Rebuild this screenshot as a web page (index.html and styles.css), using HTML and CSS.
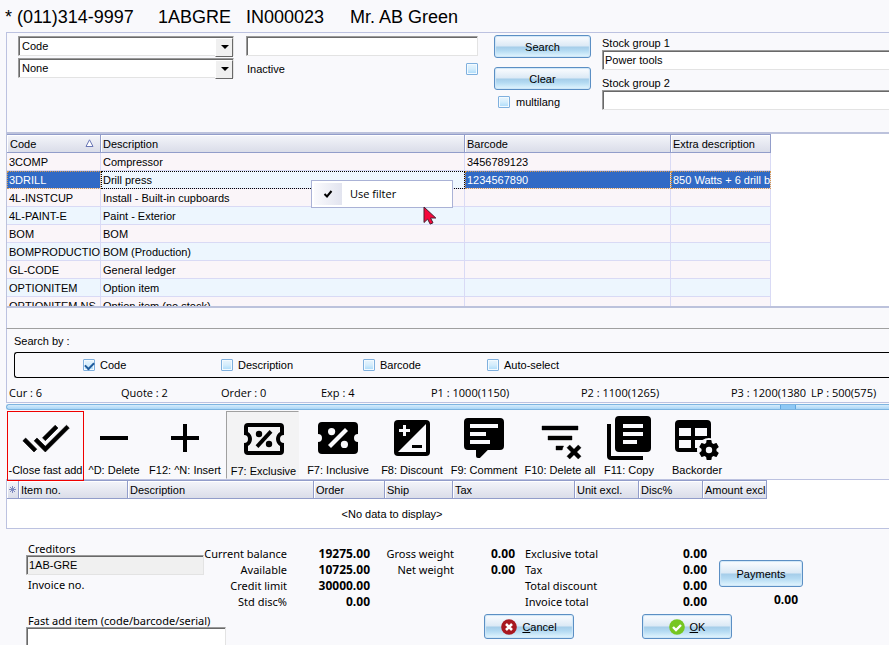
FILE: index.html
```html
<!DOCTYPE html>
<html lang="en">
<head>
<meta charset="utf-8">
<title>Invoice</title>
<link rel="stylesheet" href="styles.css">
</head>
<body>
<header class="title"><span class="t-phone">* (011)314-9997</span><span class="t-account">1ABGRE</span><span class="t-invoice">IN000023</span><span>Mr. AB Green</span></header>

<main>
<section class="filters">
  <div class="filter-selects">
    <div class="combo"><select aria-label="Search field"><option>Code</option></select></div>
    <div class="combo"><select aria-label="Second search field"><option>None</option></select></div>
  </div>
  <div class="filter-value">
    <input class="box" type="text" aria-label="Search text">
    <div class="inactive"><label for="inactive">Inactive</label><input type="checkbox" id="inactive"></div>
  </div>
  <div class="filter-actions">
    <button class="btn" type="button">Search</button>
    <button class="btn" type="button">Clear</button>
    <label class="multilang"><input type="checkbox">multilang</label>
  </div>
  <div class="filter-groups">
    <label for="g1">Stock group 1</label>
    <input class="box" id="g1" type="text" value="Power tools">
    <label for="g2">Stock group 2</label>
    <input class="box" id="g2" type="text">
  </div>
</section>

<section class="stock">
  <div class="stock-scroll">
    <table class="stock-table">
      <colgroup><col class="c-code"><col class="c-desc"><col class="c-bar"><col class="c-extra"></colgroup>
      <thead><tr><th><div class="sorted">Code<svg width="9" height="9" viewBox="0 0 9 9"><path d="M4.500.8L8 7.500H1z" fill="#fff" stroke="#6a76b5"/></svg></div></th><th>Description</th><th>Barcode</th><th>Extra description</th></tr></thead>
      <tbody>
        <tr><td>3COMP</td><td>Compressor</td><td>3456789123</td><td></td></tr>
        <tr class="selected"><td>3DRILL</td><td class="focus">Drill press</td><td>1234567890</td><td>850 Watts + 6 drill b</td></tr>
        <tr><td>4L-INSTCUP</td><td>Install - Built-in cupboards</td><td></td><td></td></tr>
        <tr><td>4L-PAINT-E</td><td>Paint - Exterior</td><td></td><td></td></tr>
        <tr><td>BOM</td><td>BOM</td><td></td><td></td></tr>
        <tr><td>BOMPRODUCTIO</td><td>BOM (Production)</td><td></td><td></td></tr>
        <tr><td>GL-CODE</td><td>General ledger</td><td></td><td></td></tr>
        <tr><td>OPTIONITEM</td><td>Option item</td><td></td><td></td></tr>
        <tr><td>OPTIONITEM NS</td><td>Option item (no stock)</td><td></td><td></td></tr>
      </tbody>
    </table>
  </div>
  <div class="menu"><span class="menu-check"><svg width="10" height="10" viewBox="0 0 10 10"><path d="M1.500 5L4 7.500 8.500 2" fill="none" stroke="#000" stroke-width="2"/></svg></span><span>Use filter</span></div>
  <svg class="pointer" width="14" height="20" viewBox="0 0 14 20"><path d="M1 1v15.500l3.600-3.400 2.600 5 2.800-1.300-2.500-4.800h5.300z" fill="#f5083c" stroke="#4a2030"/></svg>
</section>

<div class="strip"></div>

<section class="searchby">
  <div class="searchby-title">Search by :</div>
  <div class="options">
    <label><input type="checkbox" checked>Code</label>
    <label><input type="checkbox">Description</label>
    <label><input type="checkbox">Barcode</label>
    <label><input type="checkbox">Auto-select</label>
  </div>
  <div class="stats"><span>Cur : 6</span><span>Quote : 2</span><span>Order : 0</span><span>Exp : 4</span><span>P1 : 1000(1150)</span><span>P2 : 1100(1265)</span><span class="cut">P3 : 1200(1380)</span><span>LP : 500(575)</span></div>
</section>

<div class="splitter"><div class="grip"></div></div>

<nav class="toolbar">
  <button type="button" class="tool w-close"><svg viewBox="0 0 24 24"><path d="M18 7l-1.410-1.410-6.340 6.340 1.410 1.410L18 7zm4.240-1.410L11.660 16.170 7.480 12l-1.410 1.410L11.660 19l12-12-1.420-1.410zM.41 13.410L6 19l1.410-1.410L1.830 12 .41 13.410z" stroke="#000" stroke-width=".3"/></svg>-Close fast add</button>
  <button type="button" class="tool w-delete"><svg viewBox="0 0 24 24"><path d="M5 11h14v2H5z"/></svg>^D: Delete</button>
  <button type="button" class="tool w-insert"><svg viewBox="0 0 24 24"><path d="M19 13h-6v6h-2v-6H5v-2h6V5h2v6h6z"/></svg>F12: ^N: Insert</button>
  <button type="button" class="tool w-excl"><svg viewBox="0 0 24 24"><path fill-rule="evenodd" d="M4 4h16a2 2 0 0 1 2 2v4a2 2 0 0 0 0 4v4a2 2 0 0 1-2 2H4a2 2 0 0 1-2-2v-4a2 2 0 0 0 0-4V6a2 2 0 0 1 2-2zM4 6v2.540a4 4 0 0 1 0 6.920V18h16v-2.540a4 4 0 0 1 0-6.920V6z"/><path d="M14.800 7.500L16.200 8.900 9.200 16.500 7.800 15.100z"/><circle cx="9.500" cy="9.500" r="1.600"/><circle cx="14.500" cy="14.500" r="1.600"/></svg>F7: Exclusive</button>
  <button type="button" class="tool w-incl"><svg viewBox="0 0 24 24"><path d="M4 4h16a2 2 0 0 1 2 2v4a2 2 0 0 0 0 4v4a2 2 0 0 1-2 2H4a2 2 0 0 1-2-2v-4a2 2 0 0 0 0-4V6a2 2 0 0 1 2-2z"/><path d="M15.500 7L17 8.500 8.500 17 7 15.500z" fill="#f9f9fc"/><circle cx="8.800" cy="8.800" r="1.800" fill="#f9f9fc"/><circle cx="15.200" cy="15.200" r="1.800" fill="#f9f9fc"/></svg>F7: Inclusive</button>
  <button type="button" class="tool w-disc"><svg viewBox="0 0 24 24"><rect x="3" y="3" width="18" height="18" rx="2"/><path d="M19 5v14H5z" fill="#f9f9fc"/><path d="M5.500 7.500h2v-2H9v2h2V9H9v2H7.500V9h-2z" fill="#f9f9fc"/><path d="M12 15.500h5V17h-5z"/></svg>F8: Discount</button>
  <button type="button" class="tool w-comment"><svg viewBox="0 0 24 24"><path fill-rule="evenodd" d="M9 22a1 1 0 0 1-1-1v-3H4a2 2 0 0 1-2-2V4a2 2 0 0 1 2-2h16a2 2 0 0 1 2 2v12a2 2 0 0 1-2 2h-6.100l-3.700 3.710c-.2.19-.45.29-.7.29zM5 5v2h14V5zm0 4v2h8V9zm0 4v2h10v-2z"/></svg>F9: Comment</button>
  <button type="button" class="tool w-delall"><svg viewBox="0 0 24 24"><path d="M21 8H3V6h18zM13.810 16H10v2h3.090c.12-.72.37-1.390.72-2M18 11H6v2h12zM21.120 15.460L19 17.590l-2.120-2.130-1.410 1.420L17.590 19l-2.120 2.120 1.410 1.420L19 20.410l2.120 2.130 1.420-1.420L20.410 19l2.130-2.120z" stroke="#000" stroke-width=".2"/></svg>F10: Delete all</button>
  <button type="button" class="tool w-copy"><svg viewBox="0 0 24 24"><path d="M3 5H1v16a2 2 0 0 0 2 2h16v-2H3z"/><path fill-rule="evenodd" d="M21 1H7a2 2 0 0 0-2 2v14a2 2 0 0 0 2 2h14a2 2 0 0 0 2-2V3a2 2 0 0 0-2-2zM9 5h10v2H9zm0 4h10v2H9zm0 4h7v2H9z"/></svg>F11: Copy</button>
  <button type="button" class="tool w-back"><svg viewBox="1 0 24 24"><path fill-rule="evenodd" d="M4 3h14a2 2 0 0 1 2 2v7.080a6 6 0 0 0-4.320.920H12v4h1.080a6 6 0 0 0 0 2H4a2 2 0 0 1-2-2V5a2 2 0 0 1 2-2zM4 7v4h6V7zm8 0v4h6V7zm-8 6v4h6v-4z"/><path transform="translate(13 12) scale(.5)" fill-rule="evenodd" d="M19.430 12.980c.04-.32.07-.64.07-.98s-.03-.66-.07-.98l2.110-1.650c.19-.15.24-.42.12-.64l-2-3.460c-.12-.22-.39-.3-.61-.22l-2.490 1c-.52-.4-1.080-.73-1.690-.98l-.38-2.650A.49.49 0 0 0 14 2h-4c-.25 0-.46.18-.49.42l-.38 2.650c-.61.25-1.170.59-1.690.98l-2.490-1c-.23-.09-.49 0-.61.22l-2 3.460c-.13.22-.07.49.12.64l2.110 1.650c-.04.32-.07.65-.07.98s.03.66.07.98l-2.110 1.650c-.19.15-.24.42-.12.64l2 3.460c.12.22.39.3.61.22l2.490-1c.52.4 1.080.73 1.690.98l.38 2.650c.03.24.24.42.49.42h4c.25 0 .46-.18.49-.42l.38-2.650c.61-.25 1.170-.59 1.690-.98l2.490 1c.23.09.49 0 .61-.22l2-3.460c.12-.22.07-.49-.12-.64zM12 15.200a3.200 3.200 0 1 1 0-6.400 3.200 3.200 0 0 1 0 6.400z"/></svg>Backorder</button>
</nav>

<section class="lines">
  <table class="line-table">
    <colgroup><col class="l-mark"><col class="l-item"><col class="l-desc"><col class="l-order"><col class="l-ship"><col class="l-tax"><col class="l-unit"><col class="l-disc"><col class="l-amount"></colgroup>
    <thead><tr><th class="mark"><svg width="7" height="7" viewBox="0 0 7 7"><path d="M3.500 0v7M0 3.500h7M1 1l5 5M6 1L1 6" stroke="#7f8bc0" fill="none"/></svg></th><th>Item no.</th><th>Description</th><th>Order</th><th>Ship</th><th>Tax</th><th>Unit excl.</th><th>Disc%</th><th>Amount excl</th></tr></thead>
    <tbody><tr><td colspan="9">&lt;No data to display&gt;</td></tr></tbody>
  </table>
</section>

<section class="footer">
  <div class="account">
    <label for="cred">Creditors</label>
    <input class="box readonly" id="cred" type="text" value="1AB-GRE" readonly>
    <div class="invoice-no">Invoice no.</div>
    <label for="fast">Fast add item (code/barcode/serial)</label>
    <input class="box fast" id="fast" type="text">
  </div>
  <div class="sums">
    <div class="totals">
      <span class="r">Current balance</span><b>19275.00</b><span class="r">Gross weight</span><b>0.00</b><span class="l">Exclusive total</span><b>0.00</b>
      <span class="r">Available</span><b>10725.00</b><span class="r">Net weight</span><b>0.00</b><span class="l">Tax</span><b>0.00</b>
      <span class="r">Credit limit</span><b>30000.00</b><span></span><span></span><span class="l">Total discount</span><b>0.00</b>
      <span class="r">Std disc%</span><b>0.00</b><span></span><span></span><span class="l">Invoice total</span><b>0.00</b>
    </div>
    <div class="confirm">
      <button class="btn" type="button"><svg width="16" height="16" viewBox="0 0 16 16"><circle cx="8" cy="8" r="7.800" fill="#a81820"/><path d="M5 5l6 6M11 5l-6 6" stroke="#fff" stroke-width="2.600"/></svg><span><u>C</u>ancel</span></button>
      <button class="btn" type="button"><svg width="16" height="16" viewBox="0 0 16 16"><circle cx="8" cy="8" r="7.800" fill="#76c622"/><path d="M4 8l3 3 5-5" fill="none" stroke="#fff" stroke-width="2.400"/></svg><span><u>O</u>K</span></button>
    </div>
  </div>
  <div class="pay"><button class="btn" type="button">Payments</button><b>0.00</b></div>
</section>
</main>
</body>
</html>
```
FILE: styles.css
```css
* { box-sizing: border-box; }
body {
  margin: 0;
  background: #f9f9fc;
  color: #000;
  font: 11px/14px "Liberation Sans", Arial, sans-serif;
  overflow: hidden;
  white-space: nowrap;
}
main { padding-left: 6px; }
button, input, select { font: inherit; color: inherit; margin: 0; }

.title { display: flex; height: 32px; padding: 7px 0 0 5px; font-size: 18px; line-height: 21px; }
.t-phone { width: 153px; }
.t-account { width: 88px; }
.t-invoice { width: 104px; }

.box {
  display: block;
  width: 100%;
  height: 20px;
  padding: 0 2px;
  background: #fff;
  border: 1px solid;
  border-color: #9a9a9a #e3e3e3 #e3e3e3 #9a9a9a;
  border-radius: 0;
  box-shadow: inset 1px 1px #696969;
  outline: 0;
}
.btn {
  display: flex;
  align-items: center;
  justify-content: center;
  gap: 5px;
  padding: 0;
  border: 1px solid #5b8fc4;
  border-radius: 3px;
  background: linear-gradient(#fcfdff, #dbe9f5 48%, #a5cde9 52%, #b4daf2 70%, #e4f7ff);
  box-shadow: inset 0 0 1px 1px #cfe6f7;
}
input[type="checkbox"] {
  appearance: none;
  width: 12px;
  height: 12px;
  flex: none;
  border: 1px solid #7fb0de;
  border-radius: 1px;
  background: linear-gradient(#e9f5fd, #d4edfc 50%, #a9dafa);
  box-shadow: inset 0 0 0 1px #f2faff;
}
input[type="checkbox"]:checked::before {
  content: "";
  display: block;
  width: 7px;
  height: 4px;
  margin: 2px 0 0 1px;
  border: solid #1f5b9c;
  border-width: 0 0 2px 2px;
  transform: rotate(-45deg);
}

/* Stock filter */
.filters { display: flex; height: 100px; border: solid #bcc2e0; border-width: 1px 0 0 1px; padding-left: 11px; }
.filter-selects { width: 216px; padding-top: 3px; display: flex; flex-direction: column; gap: 2px; }
.combo { position: relative; height: 20px; }
.combo select {
  appearance: none;
  width: 100%;
  height: 20px;
  padding: 0 20px 0 3px;
  border: 1px solid;
  border-color: #9a9a9a #e3e3e3 #e3e3e3 #9a9a9a;
  border-radius: 0;
  background: #fff;
  box-shadow: inset 1px 1px #696969;
}
.combo::before {
  content: "";
  position: absolute;
  right: 1px;
  top: 2px;
  width: 16px;
  height: 17px;
  background: #f0f0f0;
  border: 1px solid;
  border-color: #fff #696969 #696969 #fff;
  pointer-events: none;
}
.combo::after {
  content: "";
  position: absolute;
  right: 5px;
  top: 9px;
  border: 4px solid transparent;
  border-top-color: #000;
  border-bottom: 0;
  pointer-events: none;
}
.filter-value { width: 232px; margin-left: 12px; padding-top: 3px; }
.inactive { display: flex; align-items: center; justify-content: space-between; margin-top: 6px; padding-left: 1px; }
.filter-actions { width: 97px; margin-left: 16px; padding-top: 2px; display: flex; flex-direction: column; }
.filter-actions .btn { height: 23px; margin-bottom: 9px; }
.multilang { display: flex; align-items: center; gap: 6px; padding: 0 4px; margin-top: -4px; }
.filter-groups { flex: 1; margin-left: 11px; padding-top: 3px; }
.filter-groups .box { border-right: 0; margin-bottom: 6px; }

/* Stock grid */
.stock { position: relative; }
.stock-scroll { height: 176px; overflow: hidden; background: #fff; border: solid #bcc2dc; border-width: 2px 0 2px 1px; }
table { border-collapse: separate; border-spacing: 0; table-layout: fixed; }
th {
  height: 19px;
  padding: 0 2px;
  font-weight: normal;
  text-align: left;
  background: linear-gradient(#f4f5fa, #dadde9);
  border: solid #929dca;
  border-width: 1px 1px 1px 0;
  box-shadow: inset 1px 1px #fff;
}
.stock-table { width: 764px; }
.c-code { width: 94px; }
.c-desc { width: 364px; }
.c-bar { width: 206px; }
.sorted { display: flex; align-items: center; justify-content: space-between; padding-right: 4px; padding-left: 1px; }
.stock-table td { height: 18px; padding: 0 2px; overflow: hidden; background: #faf5f9; border: solid #d9daf5; border-width: 0 1px 1px 0; }
.stock-table tr:nth-child(even) td { background: #edf6fe; }
.stock-table tr.selected td {
  background: #316ac5 padding-box;
  color: #fff;
  outline: 1px dotted #d69a4e;
  outline-offset: -1px;
}
.stock-table tr.selected td.focus { background: #edf6fe; color: #000; outline-color: #000; }
.menu {
  position: absolute;
  left: 305px;
  top: 48px;
  width: 142px;
  height: 28px;
  display: flex;
  align-items: center;
  gap: 8px;
  padding: 2px;
  background: #fff;
  border: 1px solid #aab2d6;
  font: 11px/16px "Open Sans", sans-serif;
}
.menu-check { width: 28px; height: 22px; display: flex; align-items: center; justify-content: center; background: linear-gradient(90deg, #fafafd, #e2e4ef); }
.pointer { position: absolute; left: 417px; top: 74px; }

.strip { height: 20px; border-left: 1px solid #bcc2e0; }

/* Search options and prices */
.searchby { border: solid #a0a0a0; border-width: 1px 0 0; border-bottom: 1px solid #bcc2e0; border-left: 1px solid #bcc2e0; }
.searchby-title { padding: 5px 0 4px 7px; }
.options { display: flex; align-items: center; height: 26px; margin-left: 7px; padding-left: 68px; border: 1px solid #000; border-right: 0; border-radius: 3px 0 0 3px; }
.options label { display: flex; align-items: center; gap: 5px; width: 138px; }
.options label:nth-child(2) { width: 142px; }
.options label:nth-child(3) { width: 124px; }
.stats { display: grid; grid-template-columns: 112px 100px 100px 110px 150px 150px 75px 1fr; padding: 7px 0 2px 2px; font: 11px/15px "Open Sans", sans-serif; }
.stats .cut { overflow: hidden; }
.stats span:last-child { padding-left: 5px; }

.splitter { height: 6px; margin-top: 1px; border: 1px solid #7db4e0; border-right: 0; border-radius: 3px 0 0 3px; background: linear-gradient(#d6ecfb, #a9d6f7); display: flex; justify-content: flex-end; }
.grip { width: 16px; margin-right: 93px; background: #8ec8f5; border: solid #62a6de; border-width: 0 1px; }

/* Toolbar */
.toolbar { display: flex; height: 68px; padding-left: 1px; margin-top: 1px; }
.tool { flex: none; display: flex; flex-direction: column; align-items: center; gap: 1px; padding: 2px 0 0; border: 1px solid transparent; background: none; line-height: 14px; white-space: nowrap; }
.tool svg { width: 48px; height: 48px; flex: none; }
.w-close { width: 77px; height: 70px; border-color: #f00000; position: relative; z-index: 1; }
.w-delete { width: 60px; }
.w-insert { width: 82px; }
.w-excl { width: 73px; padding: 3px 0 0 2px; border-color: #a0a0a0 transparent transparent #a0a0a0; background: #f3f3f4; }
.w-incl { width: 78px; }
.w-disc { width: 70px; }
.w-comment { width: 74px; }
.w-delall { width: 78px; }
.w-copy { width: 60px; }
.w-back { width: 76px; }

/* Invoice lines */
.lines { background: #fff; border: solid #bcc2e0; border-width: 1px 0 1px 1px; }
.line-table { width: 760px; }
.line-table td { height: 29px; padding: 1px 0 0 10px; text-align: center; }
.l-mark { width: 12px; }
.l-item { width: 109px; }
.l-desc { width: 186px; }
.l-order { width: 71px; }
.l-ship { width: 68px; }
.l-tax { width: 122px; }
.l-unit, .l-disc { width: 64px; }
.mark svg { display: block; }

/* Totals */
.footer { display: flex; padding-left: 20px; font: 11px/16px "Noto Sans", sans-serif; }
.account { width: 178px; padding-top: 12px; }
.account label, .invoice-no { display: block; height: 14px; padding-left: 2px; line-height: 16px; }
.account .box { font-family: "Liberation Sans", Arial, sans-serif; }
.account .readonly { background: #f0f0f0; }
.invoice-no { margin: 2px 0 22px; }
.account .fast { width: 200px; }
.sums { width: 503px; padding-top: 17px; }
.totals { display: grid; grid-template-columns: 83px 83px 84px 61px 117px 75px; }
.totals b, .pay b { font-family: "Open Sans", sans-serif; font-size: 12px; text-align: right; }
.totals .r { justify-self: end; }
.totals .l { padding-left: 10px; }
.confirm { display: flex; gap: 68px; padding: 4px 0 0 280px; font-family: "Liberation Sans", Arial, sans-serif; }
.confirm .btn { flex: none; width: 90px; height: 25px; }
.pay { width: 84px; margin-left: 12px; padding-top: 31px; display: flex; flex-direction: column; gap: 5px; }
.pay .btn { height: 27px; font-family: "Liberation Sans", Arial, sans-serif; }
.pay b { padding-right: 5px; }
```
